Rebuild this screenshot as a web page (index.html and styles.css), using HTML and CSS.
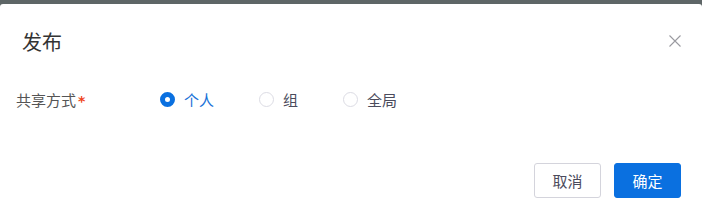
FILE: index.html
```html
<!DOCTYPE html>
<html lang="zh-CN">
<head>
    <meta charset="UTF-8">
    <title>发布</title>
    <link rel="stylesheet" href="styles.css">
</head>
<body>
    <div class="mask"></div>
    <div class="dialog">
        <div class="dialog-header">
            <h2>发布</h2>
            <span class="close">
                <svg width="12" height="12" viewBox="0 0 12 12"><path d="M0.5 0.5L11.5 11.5M11.5 0.5L0.5 11.5" stroke="#9a9aa0" stroke-width="1.1" fill="none"/></svg>
            </span>
        </div>
        <div class="dialog-body">
            <div class="form-row">
                <label class="form-label">共享方式<span class="required">*</span></label>
                <div class="radio-group">
                    <label class="radio checked"><span class="radio-dot"></span>个人</label>
                    <label class="radio"><span class="radio-dot"></span>组</label>
                    <label class="radio"><span class="radio-dot"></span>全局</label>
                </div>
            </div>
        </div>
        <div class="dialog-footer">
            <button class="btn">取消</button>
            <button class="btn btn-primary">确定</button>
        </div>
    </div>
</body>
</html>
```

FILE: styles.css
```css
body {
    margin: 0;
    background: #5e6667;
    font-family: "Noto Sans CJK SC", "Noto Sans", sans-serif;
    width: 702px;
    height: 219px;
    overflow: hidden;
}
.mask {
    height: 4px;
}
.dialog {
    background: #fff;
    border-radius: 3px 3px 0 0;
    height: 215px;
}
.dialog-header {
    display: flex;
    justify-content: space-between;
    align-items: center;
    padding: 23px 21px 0 22px;
    height: 30px;
}
.dialog-header h2 {
    margin: 0;
    font-size: 20px;
    font-weight: normal;
    color: #333;
    line-height: 30px;
}
.close {
    display: flex;
    margin-top: -2px;
}
.dialog-body {
    padding: 30px 0 0 16px;
}
.form-row {
    display: flex;
    align-items: center;
    height: 24px;
}
.form-label {
    width: 144px;
    font-size: 15px;
    color: #555;
}
.required {
    color: #f0441c;
    margin-left: 2px;
    font-weight: bold;
    font-family: "DejaVu Sans", sans-serif;
    font-size: 14px;
}
.radio-group {
    display: flex;
    align-items: center;
}
.radio {
    display: flex;
    align-items: center;
    font-size: 15px;
    color: #4b4b5c;
    margin-right: 45px;
}
.radio-dot {
    width: 13px;
    height: 13px;
    border: 1px solid #dcdce4;
    border-radius: 50%;
    margin-right: 9px;
    box-sizing: content-box;
}
.radio.checked {
    color: #1a72d8;
}
.radio.checked .radio-dot {
    width: 5px;
    height: 5px;
    border: 5px solid #0a70e0;
}
.dialog-footer {
    display: flex;
    justify-content: flex-end;
    padding: 52px 21px 0 0;
    gap: 13px;
}
.btn {
    width: 67px;
    height: 35px;
    border: 1px solid #d4d4dc;
    border-radius: 3px;
    background: #fff;
    color: #4b4b5c;
    font-family: inherit;
    font-size: 15px;
    padding: 0;
}
.btn-primary {
    background: #0a70e0;
    border-color: #0a70e0;
    color: #fff;
}
```
